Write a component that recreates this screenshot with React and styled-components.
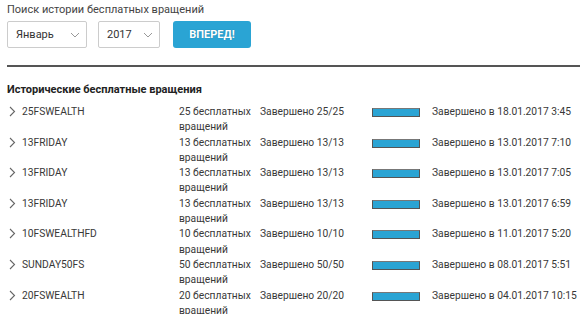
import React from "react";
import styled, { createGlobalStyle } from "styled-components";

const Global = createGlobalStyle`
  body {
    margin: 0;
    background: #fff;
    font-family: Roboto, "Liberation Sans", sans-serif;
    color: #333;
  }
`;

const Page = styled.div`
  padding: 3px 0 0 7px;
`;

const SearchLabel = styled.div`
  font-size: 11px;
  line-height: 14px;
  color: #444;
`;

const Controls = styled.div`
  display: flex;
  align-items: center;
  margin-top: 4px;
`;

const Select = styled.div`
  box-sizing: border-box;
  width: ${(p) => p.width}px;
  height: 27px;
  margin-right: ${(p) => p.gap}px;
  border: 1px solid #ccc;
  border-radius: 2px;
  display: flex;
  align-items: center;
  justify-content: space-between;
  padding: 0 6px 0 8px;
  font-size: 11px;
  color: #333;
`;

const GoButton = styled.button`
  width: 78px;
  height: 27px;
  border: none;
  border-radius: 3px;
  background: #2aa4d4;
  color: #fff;
  font-family: Roboto, "Liberation Sans", sans-serif;
  font-weight: 700;
  font-size: 11px;
  text-shadow: 0 0 1px rgba(0, 0, 0, 0.25);
  padding: 0;
`;

const Divider = styled.div`
  height: 2px;
  background: #555;
  margin-top: 17px;
`;

const Heading = styled.div`
  font-weight: 700;
  font-size: 11px;
  color: #222;
  margin-top: 16px;
  line-height: 14px;
`;

const Table = styled.div`
  margin-top: 7px;
`;

const Row = styled.div`
  display: grid;
  grid-template-columns: 15px 157px 81px 112px 60px 1fr;
  font-size: 10.25px;
  line-height: 15.3px;
  color: #383838;
  white-space: nowrap;
`;

const Chevron = styled.div`
  padding-top: 2px;
  padding-left: 2px;
`;

const Bar = styled.div`
  box-sizing: border-box;
  width: 48px;
  height: 9px;
  margin-top: 4px;
  border: 1px solid #555;
  border-top-color: #777;
  background: #2aa4d4;
`;

const ChevronDown = () => (
  <svg width="10" height="6" viewBox="0 0 10 6">
    <path d="M1 1l4 4 4-4" fill="none" stroke="#999" strokeWidth="1" />
  </svg>
);

const ChevronRight = () => (
  <svg width="7" height="11" viewBox="0 0 7 11">
    <path d="M1 1l4.5 4.5L1 10" fill="none" stroke="#666" strokeWidth="1.1" />
  </svg>
);

const rows = [
  ["25FSWEALTH", 25, "18.01.2017 3:45"],
  ["13FRIDAY", 13, "13.01.2017 7:10"],
  ["13FRIDAY", 13, "13.01.2017 7:05"],
  ["13FRIDAY", 13, "13.01.2017 6:59"],
  ["10FSWEALTHFD", 10, "11.01.2017 5:20"],
  ["SUNDAY50FS", 50, "08.01.2017 5:51"],
  ["20FSWEALTH", 20, "04.01.2017 10:15"],
];

export default function App() {
  return (
    <Page>
      <Global />
      <SearchLabel>Поиск истории бесплатных вращений</SearchLabel>
      <Controls>
        <Select width={80} gap={11}>
          Январь <ChevronDown />
        </Select>
        <Select width={62} gap={13}>
          2017 <ChevronDown />
        </Select>
        <GoButton>ВПЕРЕД!</GoButton>
      </Controls>
      <Divider />
      <Heading>Исторические бесплатные вращения</Heading>
      <Table>
        {rows.map(([code, n, date], i) => (
          <Row key={i}>
            <Chevron>
              <ChevronRight />
            </Chevron>
            <div>{code}</div>
            <div>
              {n} бесплатных
              <br />
              вращений
            </div>
            <div>
              Завершено {n}/{n}
            </div>
            <div>
              <Bar />
            </div>
            <div>Завершено в {date}</div>
          </Row>
        ))}
      </Table>
    </Page>
  );
}
